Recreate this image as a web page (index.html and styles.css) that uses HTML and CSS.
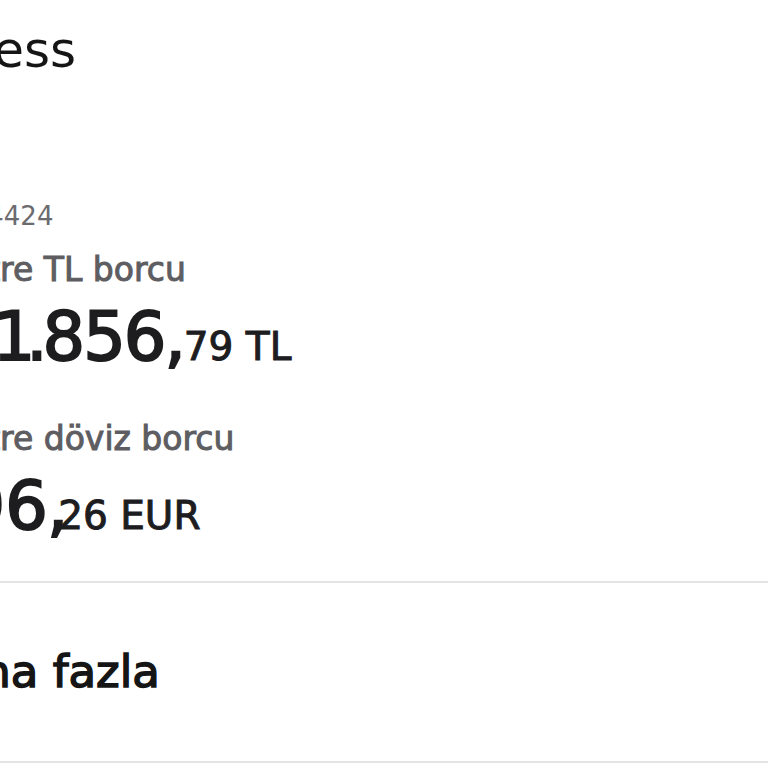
FILE: index.html
```html
<!DOCTYPE html>
<html>
  <head>
    <meta charset="UTF-8" />
    <title>Axess</title>
    <link rel="stylesheet" href="styles.css">
  </head>
  <body>
    <div class="screen">
      <header class="top-bar">
        <h1 class="brand">Axess</h1>
      </header>

      <section class="debt-card">
        <div class="card-no">**** 4424</div>

        <div class="debt-item">
          <div class="debt-label">Ekstre TL borcu</div>
          <div class="debt-amount tl">
            <span class="amount-int">2<span class="narrow-one">1</span><span class="narrow-dot">.</span>856,</span><span class="amount-dec">79 TL</span>
          </div>
        </div>

        <div class="debt-item mt-gap">
          <div class="debt-label">Ekstre döviz borcu</div>
          <div class="debt-amount eur">
            <span class="amount-int">196<span class="sep">,</span></span><span class="amount-dec">26 EUR</span>
          </div>
        </div>
      </section>

      <div class="divider"></div>

      <a class="more-row">Daha fazla</a>

      <div class="divider"></div>
    </div>
  </body>
</html>
```

FILE: styles.css
```css
:root {
  --background: #ffffff;
  --title: #151515;
  --amount: #1d1d1f;
  --label: #5d5d62;
  --muted: #6b6b6f;
  --line: #e4e4e4;
}

body {
  background-color: var(--background);
  margin: 0;
  padding: 0;
  overflow: hidden;
  font-family: "DejaVu Sans", "Noto Sans", sans-serif;
}

.screen {
  margin-left: -70px;
  width: 900px;
}

.top-bar {
  padding-top: 19px;
}

.brand {
  margin: 0 0 0 1px;
  font-size: 50px;
  line-height: 62px;
  font-weight: 400;
  color: var(--title);
}

.debt-card {
  padding-top: 119px;
  padding-bottom: 35px;
}

.card-no {
  margin: 0 0 18px -3px;
  font-size: 26px;
  line-height: 32px;
  color: var(--muted);
}

.debt-label {
  font-size: 33px;
  line-height: 40px;
  color: var(--label);
  -webkit-text-stroke: 1px var(--label);
  margin-bottom: 7px;
}

.debt-amount {
  font-size: 67px;
  line-height: 80px;
  color: var(--amount);
  white-space: nowrap;
}

.debt-amount.tl {
  margin-left: 22px;
}

.debt-amount.tl .amount-int {
  letter-spacing: -2px;
}

.debt-amount.eur {
  margin-left: -10px;
}

.amount-int {
  -webkit-text-stroke: 2px var(--amount);
}

.narrow-one {
  letter-spacing: -9px;
}

.narrow-dot {
  letter-spacing: -5px;
}

.sep {
  margin-left: -1px;
  letter-spacing: -10px;
}

.amount-dec {
  font-size: 39px;
  line-height: 1;
  letter-spacing: 0;
  -webkit-text-stroke: 1px var(--amount);
}

.mt-gap {
  margin-top: 42px;
}

.divider {
  height: 2px;
  background: var(--line);
}

.more-row {
  display: block;
  margin-left: -10px;
  padding: 61px 0 61px;
  font-size: 45px;
  line-height: 56px;
  color: var(--title);
  -webkit-text-stroke: 1.5px var(--title);
}
```
